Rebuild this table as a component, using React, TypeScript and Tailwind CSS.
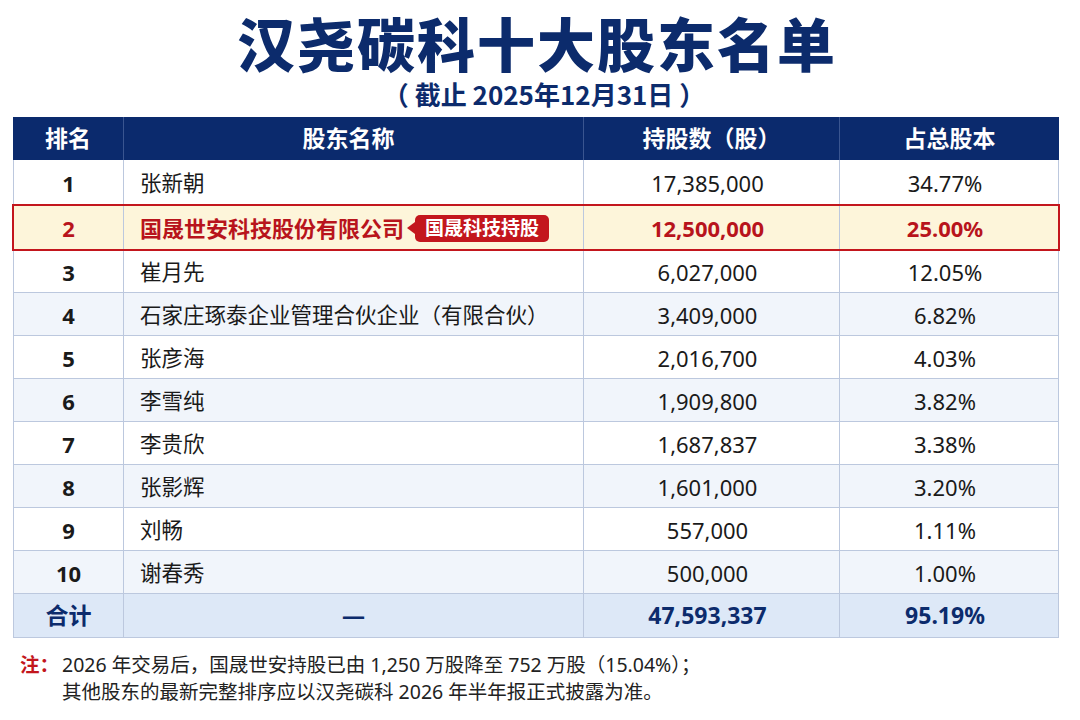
const FONT = { fontFamily: '"Noto Sans", "Noto Sans CJK SC", sans-serif' };
const CJK = { fontFamily: '"Noto Sans CJK SC", sans-serif' };

interface Holder {
  rank: number;
  name: string;
  shares: string;
  ratio: string;
}

const HOLDERS: Holder[] = [
  { rank: 1, name: "张新朝", shares: "17,385,000", ratio: "34.77%" },
  { rank: 2, name: "国晟世安科技股份有限公司", shares: "12,500,000", ratio: "25.00%" },
  { rank: 3, name: "崔月先", shares: "6,027,000", ratio: "12.05%" },
  { rank: 4, name: "石家庄琢泰企业管理合伙企业（有限合伙）", shares: "3,409,000", ratio: "6.82%" },
  { rank: 5, name: "张彦海", shares: "2,016,700", ratio: "4.03%" },
  { rank: 6, name: "李雪纯", shares: "1,909,800", ratio: "3.82%" },
  { rank: 7, name: "李贵欣", shares: "1,687,837", ratio: "3.38%" },
  { rank: 8, name: "张影辉", shares: "1,601,000", ratio: "3.20%" },
  { rank: 9, name: "刘畅", shares: "557,000", ratio: "1.11%" },
  { rank: 10, name: "谢春秀", shares: "500,000", ratio: "1.00%" },
];

const COLS = "grid grid-cols-[111px_460px_256px_219px]";
const CELL = "flex items-center border-r border-b border-[#bcc8de]";

function Row({ h }: { h: Holder }) {
  const hl = h.rank === 2;
  const bg = hl ? "bg-[#fdf5da]" : h.rank % 2 === 0 ? "bg-[#f1f5fb]" : "bg-white";
  const text = hl ? "text-[#b8141c] font-bold" : "text-[#1a1a1a]";
  const height = h.rank <= 2 ? "h-[45px]" : "h-[43px]";

  return (
    <div className={`${COLS} ${bg} ${text} text-[22px] ${height} ${hl ? "relative z-10 outline-2 outline-[#c3161d] -outline-offset-1" : ""}`}>
      <div className={`${CELL} justify-center border-l font-bold pt-[2px]`}>{h.rank}</div>
      <div className={`${CELL} pl-4 pt-[2px] ${hl ? "text-[22px]" : "text-[21.5px]"}`}>
        <span>{h.name}</span>
        {hl && (
          <span className="ml-[3px] flex items-center">
            <span className="w-0 h-0 border-y-[6px] border-y-transparent border-r-[8px] border-r-[#c3161d]" />
            <span className="h-[27px] px-[10px] rounded-[5px] bg-[#c3161d] text-white text-[19px] font-bold flex items-center">
              国晟科技持股
            </span>
          </span>
        )}
      </div>
      <div className={`${CELL} justify-center pt-[2px] pr-[8px]`}>{h.shares}</div>
      <div className={`${CELL} justify-center pt-[2px] pr-[8px]`}>{h.ratio}</div>
    </div>
  );
}

export default function App() {
  return (
    <div className="w-[1080px] h-[720px] bg-white overflow-hidden" style={FONT}>
      <h1 className="pt-[6px] pr-[6px] text-center text-[58px] leading-[72px] font-black tracking-[2px] text-[#0c2b6c]" style={CJK}>
        汉尧碳科十大股东名单
      </h1>
      <p className="text-center text-[26px] leading-[32px] font-bold text-[#0c2b6c] pl-[8px]" style={CJK}>
        （ 截止 2025年12月31日 ）
      </p>

      <div className="mt-[7px] ml-[13px] w-[1046px]">
        <div className={`${COLS} h-[43px] bg-[#0b2a6d] text-white text-[23px] font-bold`}>
          <div className="flex items-center justify-center border-r border-[#3a5590]">排名</div>
          <div className="flex items-center justify-center border-r border-[#3a5590] pr-[10px]">股东名称</div>
          <div className="flex items-center justify-center border-r border-[#3a5590]">持股数（股）</div>
          <div className="flex items-center justify-center">占总股本</div>
        </div>

        {HOLDERS.map(h => (
          <Row key={h.rank} h={h} />
        ))}

        <div className={`${COLS} h-[44px] bg-[#dde8f7] text-[#0c2b6c] text-[23px] font-bold`}>
          <div className={`${CELL} justify-center border-l`}>合计</div>
          <div className={`${CELL} justify-center`}>—</div>
          <div className={`${CELL} justify-center pr-[8px]`}>47,593,337</div>
          <div className={`${CELL} justify-center pr-[8px]`}>95.19%</div>
        </div>
      </div>

      <div className="mt-[13px] pl-[20px] text-[19.5px] leading-[27px] text-[#222]">
        <div className="flex">
          <span className="text-[#c3161d] font-bold w-[42px]">注：</span>
          <span>2026 年交易后，国晟世安持股已由 1,250 万股降至 752 万股（15.04%）；</span>
        </div>
        <div className="pl-[42px]">其他股东的最新完整排序应以汉尧碳科 2026 年半年报正式披露为准。</div>
      </div>
    </div>
  );
}
